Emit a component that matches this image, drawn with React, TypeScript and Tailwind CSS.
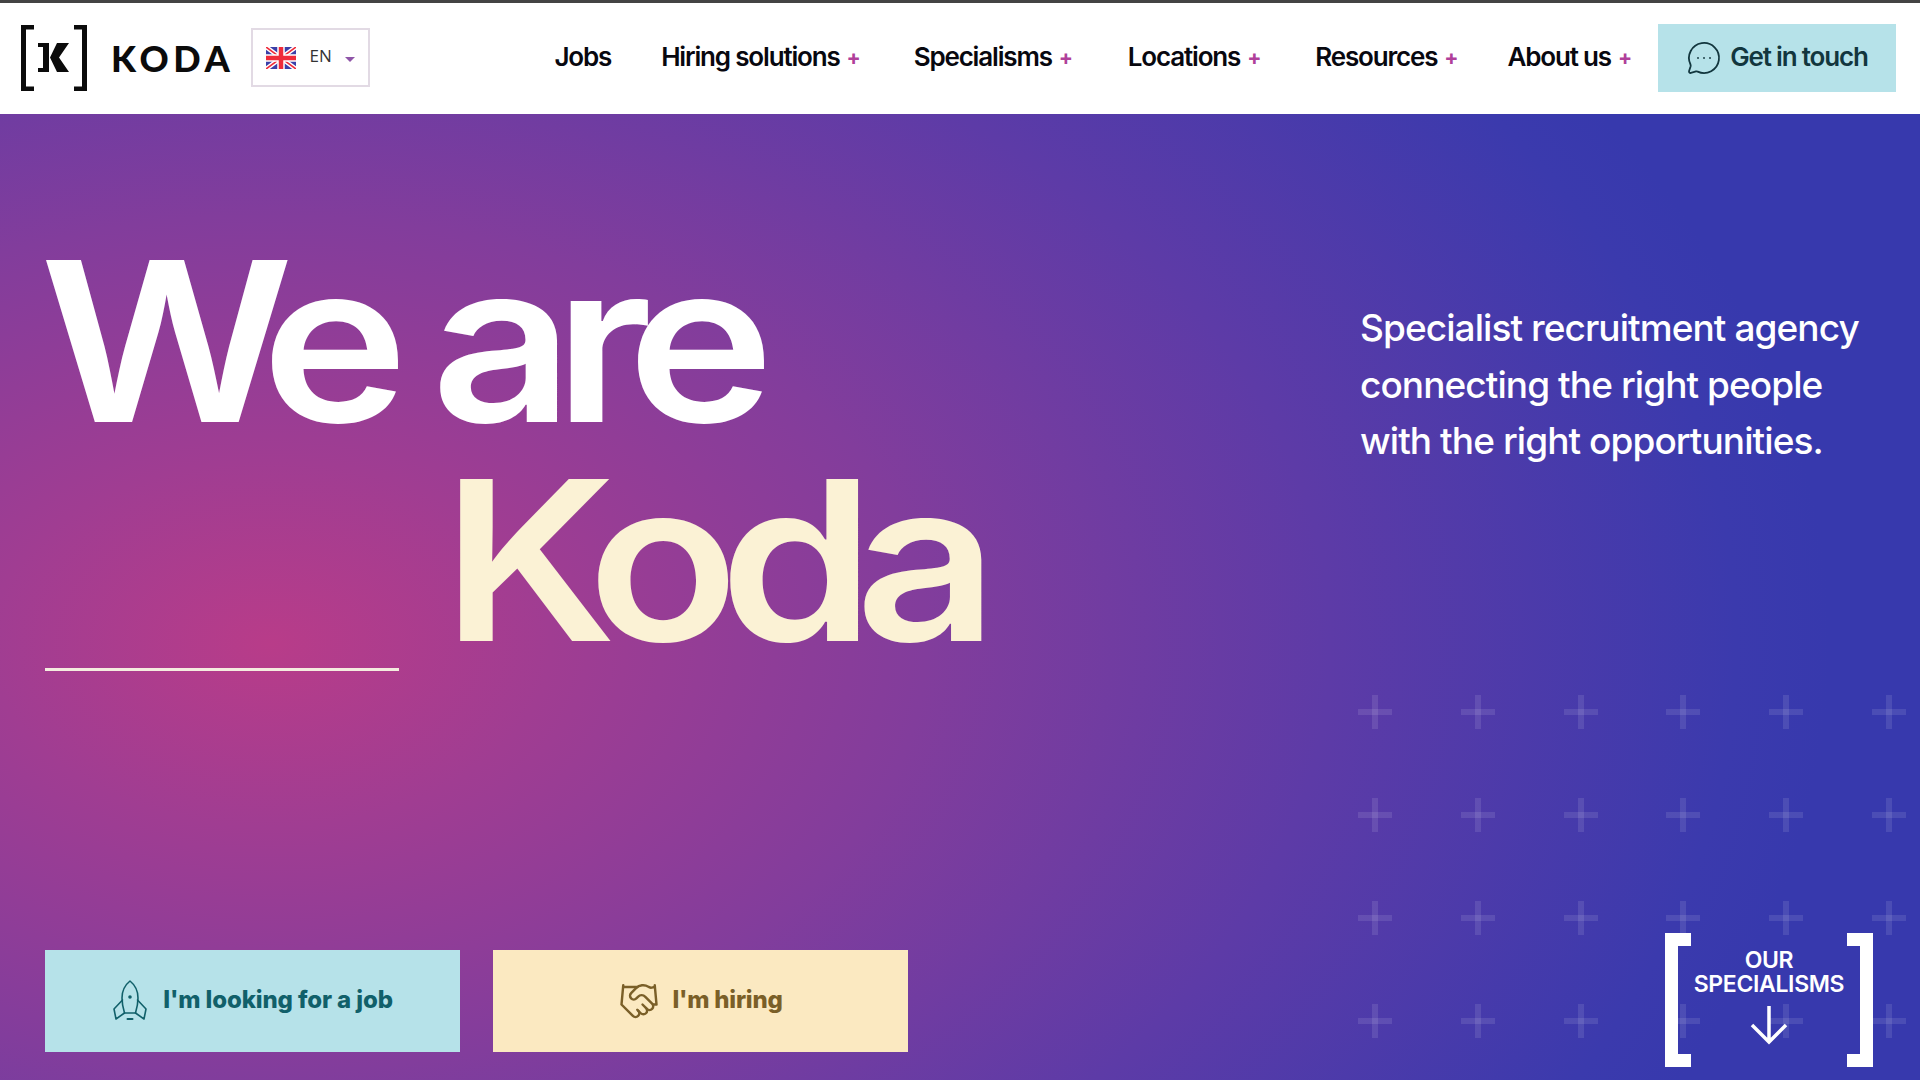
import { Handshake, MessageCircleMore } from "lucide-react";

const navItems = [
  { label: "Jobs", plus: false, gap: "mr-[50px]" },
  { label: "Hiring solutions", plus: true, gap: "mr-[54px]" },
  { label: "Specialisms", plus: true, gap: "mr-[56px]" },
  { label: "Locations", plus: true, gap: "mr-[55px]" },
  { label: "Resources", plus: true, gap: "mr-[50px]" },
  { label: "About us", plus: true, gap: "mr-[27px]" },
];

const crossKeys = Array.from({ length: 24 }, (_, i) => i);

function LogoMark() {
  return (
    <svg width="68" height="66" viewBox="0 0 68 66" className="text-[#0b0b0b]" fill="currentColor">
      <path d="M1 0h13v4.500H6v57h8V66H1z" />
      <path d="M67 0H54v4.500h8v57h-8V66h13z" />
      <path d="M18 18h11v29H18v-4h5V22h-5z" />
      <path d="M49 18H37l-7 14.500L37 47h12l-10-14.500z" />
    </svg>
  );
}

function FlagUk() {
  return (
    <svg width="30" height="22" viewBox="0 0 30 22">
      <rect width="30" height="22" fill="#3b3fa8" />
      <path d="M0 0l30 22M30 0L0 22" stroke="#fff" strokeWidth="4.5" />
      <path d="M0 0l30 22M30 0L0 22" stroke="#ef2b3a" strokeWidth="1.6" />
      <path d="M15 0v22M0 11h30" stroke="#fff" strokeWidth="7.5" />
      <path d="M15 0v22M0 11h30" stroke="#ef2b3a" strokeWidth="4.5" />
    </svg>
  );
}

function RocketIcon() {
  return (
    <svg width="36" height="42" viewBox="0 0 36 42" fill="none" stroke="#11606a" strokeWidth="1.6" strokeLinejoin="round" strokeLinecap="round">
      <path d="M18 1c-5 4-8 10-8 17 0 5 1 10 2.500 15h11c1.500-5 2.500-10 2.500-15 0-7-3-13-8-17z" />
      <path d="M10.500 20L2 29l2 10 8.500-6" />
      <path d="M25.500 20L34 29l-2 10-8.500-6" />
      <circle cx="18" cy="17" r="1" fill="#11606a" />
      <path d="M15.500 39h5" strokeWidth="2" />
    </svg>
  );
}

function Bracket({ side }: { side: "left" | "right" }) {
  return (
    <div
      className={
        side === "left"
          ? "w-[26px] self-stretch border-y-[13px] border-l-[13px] border-white"
          : "w-[26px] self-stretch border-y-[13px] border-r-[13px] border-white"
      }
    />
  );
}

export default function App() {
  return (
    <div className="h-screen w-full overflow-hidden bg-white font-['Inter',sans-serif]">
      <header className="flex h-[114px] items-center border-t-[3px] border-[#444] bg-white pb-[2px] pl-[20px] pr-[24px]">
        <LogoMark />
        <span className="ml-[23px] font-['Lato',sans-serif] text-[36px] font-black leading-none tracking-[0.13em] text-[#0b0b0b]">
          KODA
        </span>
        <div className="ml-[16px] flex h-[59px] w-[119px] items-center border-2 border-[#e2dae4] pl-[13px]">
          <FlagUk />
          <span className="mb-[3px] ml-[14px] font-['Open_Sans',sans-serif] text-[17px] text-[#333]">EN</span>
          <span className="ml-[13px] mt-[3px] h-0 w-0 border-x-[5px] border-t-[5px] border-x-transparent border-t-[#8f55a8]" />
        </div>

        <nav className="ml-auto flex items-center pb-[3px]">
          {navItems.map((item) => (
            <a key={item.label} className={`flex items-center text-[26px] font-semibold tracking-[-0.045em] text-[#08080f] ${item.gap}`}>
              {item.label}
              {item.plus && <span className="ml-[7px] mt-[3px] text-[21px] font-bold leading-none text-[#b0409a]">+</span>}
            </a>
          ))}
        </nav>
        <a className="flex h-[68px] w-[238px] items-center justify-center gap-[8px] bg-[#b6e2e9] text-[26px] font-semibold tracking-[-0.045em] text-[#12363e]">
          <MessageCircleMore size={36} strokeWidth={1.2} />
          <span className="mb-[2px]">Get in touch</span>
        </a>
      </header>

      <main className="relative flex h-[966px] justify-between overflow-hidden bg-[radial-gradient(ellipse_1560px_1020px_at_270px_530px,#b83c89_0%,#a03d92_18%,#823d9c_42%,#5d3ba7_68%,#3b3aad_94%,#3739ad_100%)]">
        <div className="absolute left-[1358px] top-[581px] grid grid-cols-[repeat(6,34px)] grid-rows-[repeat(4,34px)] gap-x-[68.800px] gap-y-[69px]">
          {crossKeys.map((k) => (
            <div key={k} className="relative h-[34px] w-[34px]">
              <div className="absolute left-[14px] top-0 h-[34px] w-[6px] bg-white/10" />
              <div className="absolute left-0 top-[14px] h-[6px] w-[34px] bg-white/10" />
            </div>
          ))}
        </div>

        <div className="relative flex flex-col justify-between pb-[28px] pl-[45px] pt-[118px]">
          <div>
            <h1 className="-ml-[5px] origin-left scale-x-[1.12] text-[222px] font-semibold leading-[220px] tracking-[-0.08em] text-white">We are</h1>
            <div className="flex items-end">
              <div className="h-[3px] w-[354px] bg-[#f4ecdf]" />
              <span className="mb-[1px] ml-[43px] origin-left scale-x-[1.12] text-[222px] font-semibold leading-[218px] tracking-[-0.078em] text-[#fbf2d5]">Koda</span>
            </div>
          </div>
          <div className="flex gap-[33px]">
            <a className="flex h-[102px] w-[415px] items-center justify-center gap-[15px] bg-[#b6e2e9] text-[24px] font-extrabold tracking-[-0.005em] text-[#11606a]">
              <RocketIcon />
              <span className="mb-[2px]">I'm looking for a job</span>
            </a>
            <a className="flex h-[102px] w-[415px] items-center justify-center gap-[12px] bg-[#fbe9c1] text-[24px] font-extrabold tracking-[-0.01em] text-[#7a5f28]">
              <Handshake size={42} strokeWidth={1.4} />
              <span className="mb-[2px]">I'm hiring</span>
            </a>
          </div>
        </div>

        <div className="relative flex w-[560px] flex-col justify-between pb-[13px] pr-[47px] pt-[186px]">
          <p className="text-[37px] font-medium leading-[56.500px] tracking-[-0.025em] text-white">
            Specialist recruitment agency connecting the right people with the right opportunities.
          </p>
          <a className="flex h-[134px] w-[208px] self-end text-white">
            <Bracket side="left" />
            <div className="flex flex-1 flex-col items-center pt-[15px] text-center text-[23px] font-semibold leading-[24px] tracking-[-0.015em]">
              <span>OUR</span>
              <span>SPECIALISMS</span>
              <svg width="38" height="40" viewBox="0 0 38 40" fill="none" stroke="#fff" strokeWidth="3.500" className="mt-[9px] shrink-0">
                <path d="M19 1v36M2 20l17 17 17-17" />
              </svg>
            </div>
            <Bracket side="right" />
          </a>
        </div>
      </main>
    </div>
  );
}
